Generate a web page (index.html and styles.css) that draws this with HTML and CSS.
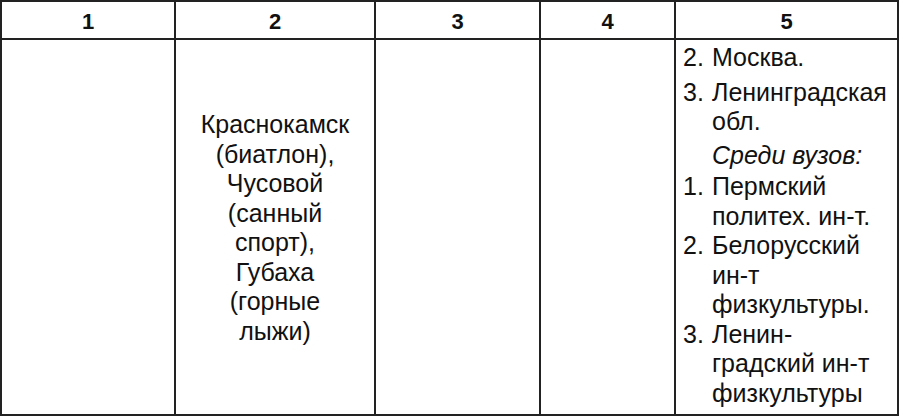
FILE: index.html
```html
<!DOCTYPE html>
<html lang="ru">
<head>
<meta charset="utf-8">
<title>Таблица</title>
<link rel="stylesheet" href="styles.css">
</head>
<body>
<div class="table">
  <div class="cell head">1</div>
  <div class="cell head">2</div>
  <div class="cell head">3</div>
  <div class="cell head">4</div>
  <div class="cell head">5</div>

  <div class="cell body"></div>
  <div class="cell body center">
    <p class="places">Краснокамск<br>(биатлон),<br>Чусовой<br>(санный<br>спорт),<br>Губаха<br>(горные<br>лыжи)</p>
  </div>
  <div class="cell body"></div>
  <div class="cell body"></div>
  <div class="cell body list">
    <div class="item"><span class="num">2.</span><span class="txt">Москва.</span></div>
    <div class="item spaced"><span class="num">3.</span><span class="txt">Ленинградская<br>обл.</span></div>
    <div class="note">Среди вузов:</div>
    <div class="item after-note"><span class="num">1.</span><span class="txt">Пермский<br>политех. ин-т.</span></div>
    <div class="item"><span class="num">2.</span><span class="txt">Белорусский<br>ин-т<br>физкультуры.</span></div>
    <div class="item"><span class="num">3.</span><span class="txt">Ленин-<br>градский ин-т<br>физкультуры</span></div>
  </div>
</div>
</body>
</html>
```

FILE: styles.css
```css
html, body {
  margin: 0;
  padding: 0;
  background: #fff;
}

body {
  font-family: "Liberation Sans", Arial, sans-serif;
  color: #111;
}

.table {
  width: 899px;
  height: 416px;
  box-sizing: border-box;
  display: grid;
  grid-template-columns: 174px 200px 165px 135px 223px;
  grid-template-rows: 38px 376px;
  border-left: 2px solid #222;
  border-top: 2px solid #222;
}

.cell {
  box-sizing: border-box;
  border-right: 2px solid #222;
  border-bottom: 2px solid #222;
}

.head {
  display: flex;
  align-items: center;
  justify-content: center;
  font-weight: bold;
  font-size: 22px;
  padding-top: 3px;
}

.body {
  font-size: 25px;
  line-height: 29.5px;
}

.center {
  display: flex;
  align-items: center;
  justify-content: center;
  text-align: center;
}

.places {
  margin: 0;
  padding-top: 2px;
}

.list {
  padding: 3px 0 0 7px;
}

.item {
  display: flex;
}

.item.spaced {
  margin-top: 5px;
}

.item.after-note {
  margin-top: 2px;
}

.num {
  width: 29px;
  flex: none;
}

.txt {
  flex: 1;
}

.note {
  font-style: italic;
  padding-left: 29px;
  margin-top: 4px;
}
```
